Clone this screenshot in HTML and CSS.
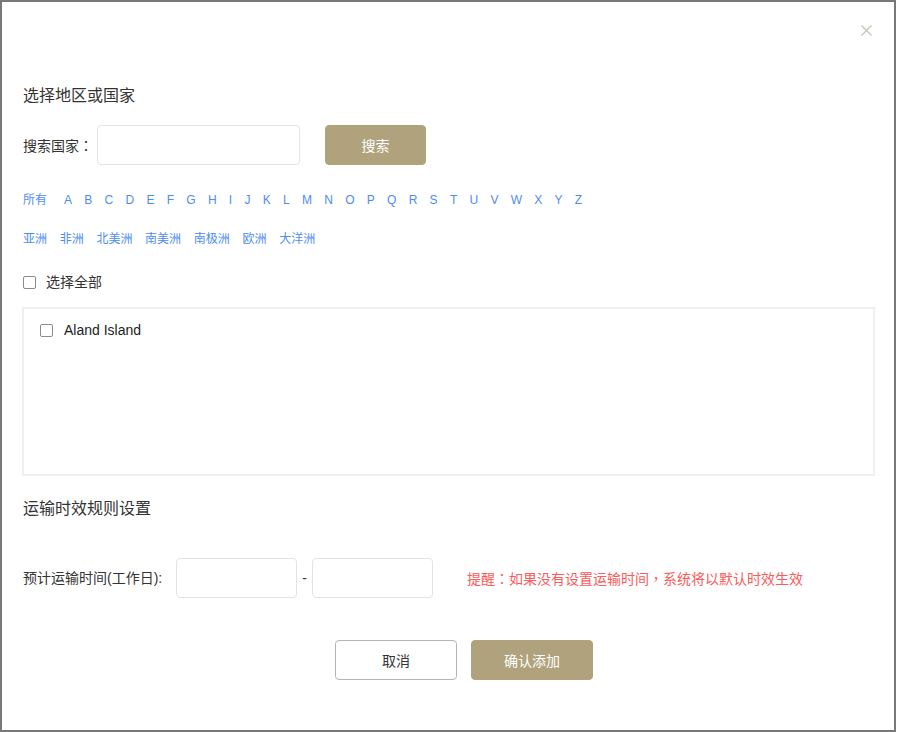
FILE: index.html
```html
<!DOCTYPE html>
<html lang="zh-CN">
<head>
<meta charset="utf-8">
<title>选择地区或国家</title>
<link rel="stylesheet" href="styles.css">
</head>
<body>
<div class="dialog">
  <button class="close" aria-label="关闭">
    <svg width="11" height="11" viewBox="0 0 11 11"><path d="M0.5 0.5 L10.5 10.5 M10.5 0.5 L0.5 10.5" stroke="#c8bfae" stroke-width="1.2" fill="none"/></svg>
  </button>

  <h2 class="section-title first">选择地区或国家</h2>

  <div class="search-row">
    <label class="search-label">搜索国家<span class="punct" lang="zh-Hant-TW">：</span></label>
    <input class="search-input" type="text">
    <button class="btn btn-primary btn-search">搜索</button>
  </div>

  <div class="letters">
    <a class="all">所有</a><a>A</a><a>B</a><a>C</a><a>D</a><a>E</a><a>F</a><a>G</a><a>H</a><a>I</a><a>J</a><a>K</a><a>L</a><a>M</a><a>N</a><a>O</a><a>P</a><a>Q</a><a>R</a><a>S</a><a>T</a><a>U</a><a>V</a><a>W</a><a>X</a><a>Y</a><a>Z</a>
  </div>

  <div class="continents">
    <a>亚洲</a><a>非洲</a><a>北美洲</a><a>南美洲</a><a>南极洲</a><a>欧洲</a><a>大洋洲</a>
  </div>

  <div class="check-row select-all">
    <span class="cbox"></span><span>选择全部</span>
  </div>

  <div class="country-list">
    <div class="check-row country">
      <span class="cbox"></span><span class="latin">Aland Island</span>
    </div>
  </div>

  <h2 class="section-title second">运输时效规则设置</h2>

  <div class="time-row">
    <span class="time-label">预计运输时间(工作日):</span>
    <input class="time-input" type="text">
    <span class="dash">-</span>
    <input class="time-input" type="text">
    <span class="tip">提醒<span class="punct" lang="zh-Hant-TW">：</span>如果没有设置运输时间<span class="punct" lang="zh-Hant-TW">，</span>系统将以默认时效生效</span>
  </div>

  <div class="actions">
    <button class="btn btn-cancel">取消</button>
    <button class="btn btn-primary btn-confirm">确认添加</button>
  </div>
</div>
</body>
</html>
```

FILE: styles.css
```css
html, body {
  margin: 0;
  padding: 0;
  background: #ffffff;
}

body {
  font-family: "Liberation Sans", "Noto Sans CJK SC", sans-serif;
  color: #333333;
}

.dialog {
  position: relative;
  box-sizing: border-box;
  width: 896px;
  height: 732px;
  border: 2px solid #787878;
  background: #ffffff;
  padding: 0 19px 0 21px;
}

.close {
  position: absolute;
  top: 23px;
  right: 22px;
  width: 11px;
  height: 11px;
  padding: 0;
  margin: 0;
  border: none;
  background: transparent;
  display: block;
  cursor: pointer;
}

.close svg {
  display: block;
}

.punct {
  font-family: "Noto Sans CJK TC", "Noto Sans CJK SC", sans-serif;
}

.section-title {
  margin: 0;
  font-size: 16px;
  font-weight: normal;
  line-height: 24px;
  color: #333333;
}

.section-title.first {
  padding-top: 82px;
}

.search-row {
  display: flex;
  align-items: center;
  margin-top: 17px;
  height: 40px;
}

.search-label {
  font-size: 14px;
  line-height: 20px;
  width: 74px;
  flex: none;
}

.search-input {
  box-sizing: border-box;
  width: 203px;
  height: 40px;
  border: 1px solid #e3e3e3;
  border-radius: 4px;
  margin: 0;
  padding: 0 8px;
  outline: none;
}

.btn {
  box-sizing: border-box;
  height: 40px;
  border-radius: 4px;
  font-family: "Liberation Sans", "Noto Sans CJK SC", sans-serif;
  font-size: 14px;
  margin: 0;
  padding: 0;
  cursor: pointer;
}

.btn-primary {
  background: #b0a27c;
  border: 1px solid #b0a27c;
  color: #ffffff;
}

.btn-search {
  width: 101px;
  margin-left: 25px;
}

.letters,
.continents {
  display: flex;
  font-size: 12px;
  line-height: 20px;
}

.letters {
  margin-top: 25px;
  gap: 12.28px;
}

.letters .all {
  margin-right: 4.7px;
}

.continents {
  margin-top: 19px;
  gap: 12.7px;
}

.letters a,
.continents a {
  color: #4e8cf5;
  text-decoration: none;
  cursor: pointer;
}

.check-row {
  display: flex;
  align-items: center;
  font-size: 14px;
  line-height: 20px;
}

.cbox {
  box-sizing: border-box;
  width: 13px;
  height: 13px;
  border: 1px solid #8a8a8a;
  border-radius: 2px;
  background: #ffffff;
  flex: none;
}

.select-all {
  margin-top: 23px;
}

.select-all .cbox {
  margin-right: 10px;
}

.country-list {
  box-sizing: border-box;
  margin-top: 15px;
  margin-left: -1px;
  height: 169px;
  border: 2px solid #f0f0f0;
  padding: 11px 16px 0 16px;
}

.country .cbox {
  margin-right: 11px;
}

.latin {
  color: #222222;
}

.section-title.second {
  margin-top: 21px;
}

.time-row {
  display: flex;
  align-items: center;
  margin-top: 37px;
  height: 40px;
  font-size: 14px;
  line-height: 20px;
}

.time-label {
  margin-right: 14px;
  flex: none;
}

.time-input {
  box-sizing: border-box;
  width: 121px;
  height: 40px;
  border: 1px solid #e3e3e3;
  border-radius: 4px;
  margin: 0;
  padding: 0 8px;
  outline: none;
}

.dash {
  margin: 0 5px;
}

.tip {
  margin-left: 34px;
  color: #fb5b5b;
}

.actions {
  display: flex;
  gap: 14px;
  margin-top: 42px;
  padding-left: 312px;
}

.btn-cancel {
  width: 122px;
  background: #ffffff;
  border: 1px solid #b4b4b4;
  color: #333333;
}

.btn-confirm {
  width: 122px;
}
```
